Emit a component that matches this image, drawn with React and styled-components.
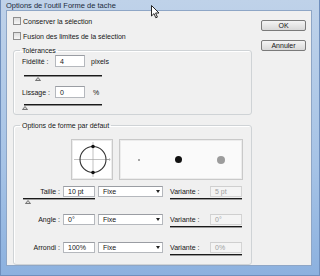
import React from "react";
import styled, { createGlobalStyle } from "styled-components";

const GlobalStyle = createGlobalStyle`
  html, body { margin: 0; padding: 0; background: #fff; }
  body {
    font-family: "Liberation Sans", Arial, sans-serif;
    font-size: 7px;
    color: #151515;
  }
`;

// window frame (aero style)
const Window = styled.div`
  position: relative;
  width: 320px;
  height: 276px;
  box-sizing: border-box;
  display: flex;
  flex-direction: column;
  background: linear-gradient(#bfd2e9, #a6c3e6 60%, #8cb1df);
  border: 1px solid #6f8fbd;
  border-top: none;
  padding: 0 7px 9px 5px;
  overflow: hidden;
`;

const TitleBar = styled.div`
  height: 18px;
  display: flex;
  align-items: center;
  font-size: 7.5px;
  color: #1c2a3c;
`;

const Cursor = styled.svg`
  position: absolute;
  left: 150px;
  top: 5px;
`;

const Client = styled.div`
  flex: 1;
  display: flex;
  gap: 9px;
  background: #f0f0f0;
  border: 1px solid #8ea6c6;
  padding: 5px 0 0 6px;
`;

const MainCol = styled.div`
  width: 239px;
  display: flex;
  flex-direction: column;
`;

const ButtonCol = styled.div`
  width: 45px;
  display: flex;
  flex-direction: column;
  gap: 9px;
  padding-top: 4px;
`;

const Button = styled.button`
  height: 11px;
  padding: 0;
  font: inherit;
  font-size: 7px;
  color: #151515;
  border: 1px solid #7a7a7a;
  border-radius: 2px;
  background: linear-gradient(#f4f4f4, #e6e6e6 50%, #d8d8d8);
  display: flex;
  align-items: center;
  justify-content: center;
`;

const CheckRow = styled.label`
  height: 10px;
  display: flex;
  align-items: center;
  gap: 2px;
  margin-top: ${(p) => (p.first ? 0 : 5)}px;
`;

const Box = styled.span`
  width: 6px;
  height: 6px;
  border: 1px solid #8e8e8e;
  background: linear-gradient(#dcdcdc, #f6f6f6);
`;

const Group = styled.fieldset`
  margin: ${(p) => p.top}px 0 0 0;
  padding: 0 0 ${(p) => p.bottom}px 0;
  border: 1px solid #cfd3d6;
  border-radius: 3px;
  box-shadow: inset 1px 1px 0 #fff;
  min-width: 0;
`;

const Legend = styled.legend`
  margin-left: 6px;
  padding: 0 2px;
  line-height: 9px;
  font-size: 7px;
`;

const TolRow = styled.div`
  height: 12px;
  display: flex;
  align-items: center;
  padding-left: 8px;
  margin-top: ${(p) => p.top}px;
`;

const TolLabel = styled.span`
  width: 33px;
`;

const Input = styled.div`
  box-sizing: border-box;
  width: ${(p) => p.w}px;
  height: ${(p) => p.h || 12}px;
  border: 1px solid ${(p) => (p.disabled ? "#d4d4d4" : "#b5b8bd")};
  border-top-color: ${(p) => (p.disabled ? "#cfcfcf" : "#9a9da3")};
  background: ${(p) => (p.disabled ? "#f4f4f4" : "#fff")};
  color: ${(p) => (p.disabled ? "#a0a0a0" : "#151515")};
  display: flex;
  align-items: center;
  padding-left: 4px;
`;

const Unit = styled.span`
  margin-left: ${(p) => p.gap}px;
`;

const Slider = styled.div`
  position: relative;
  width: ${(p) => p.w}px;
  height: 6px;
  margin: ${(p) => p.top}px 0 0 ${(p) => p.left}px;
  border-top: 1px solid #1a1a1a;
  box-shadow: inset 0 1px 0 #8a8a8a;
`;

const Thumb = styled.svg`
  position: absolute;
  top: 1px;
  left: ${(p) => p.x}px;
`;

const PreviewRow = styled.div`
  display: flex;
  gap: 6px;
  padding: 9px 0 0 57px;
`;

const PreviewBox = styled.div`
  box-sizing: border-box;
  width: ${(p) => p.w}px;
  height: 41px;
  border: 1px solid #c9c9c9;
  box-shadow: inset 0 0 0 1px #ececec;
  background: ${(p) => p.bg};
  display: flex;
  align-items: center;
  justify-content: ${(p) => p.justify || "center"};
`;

const Dot = styled.span`
  width: ${(p) => p.size}px;
  height: ${(p) => p.size}px;
  border-radius: 50%;
  background: ${(p) => p.color};
`;

const ShapeRow = styled.div`
  display: grid;
  grid-template-columns: 46px 32px 65px 41px 32px;
  grid-template-rows: 11px 6px;
  column-gap: 3px;
  row-gap: 1px;
  margin-top: ${(p) => p.top}px;
`;

const RowLabel = styled.span`
  display: flex;
  align-items: center;
  justify-content: ${(p) => (p.left ? "flex-start" : "flex-end")};
  padding-left: ${(p) => (p.left ? 4 : 0)}px;
`;

const Select = styled.div`
  box-sizing: border-box;
  border: 1px solid #b5b8bd;
  border-top-color: #9a9da3;
  background: #fff;
  display: flex;
  align-items: center;
  justify-content: space-between;
  padding: 0 2px 0 4px;
`;

const Arrow = styled.span`
  width: 0;
  height: 0;
  border-left: 2px solid transparent;
  border-right: 2px solid transparent;
  border-top: 3px solid #222;
`;

const Track = styled.div`
  position: relative;
  grid-column: ${(p) => p.col};
  margin-left: ${(p) => p.left}px;
  border-top: 1px solid #1a1a1a;
  box-shadow: inset 0 1px 0 #9a9a9a;
`;

const ThumbIcon = ({ x }) => (
  <Thumb x={x} width="6" height="4" viewBox="0 0 6 4">
    <path d="M0.5 3.5 L3 0.5 L5.5 3.5 Z" fill="#d8d8d8" stroke="#555" strokeWidth="0.8" />
  </Thumb>
);

const shapeRows = [
  { label: "Taille :", value: "10 pt", variant: "5 pt", track: true },
  { label: "Angle :", value: "0°", variant: "0°" },
  { label: "Arrondi :", value: "100%", variant: "0%" },
];

const App = () => (
  <>
    <GlobalStyle />
    <Window>
      <TitleBar>Options de l'outil Forme de tache</TitleBar>
      <Cursor width="9" height="14" viewBox="0 0 9 14">
        <path d="M0.5 0.5 L0.5 11 L3 8.6 L4.8 12.8 L6.4 12.1 L4.6 8 L8 8 Z" fill="#fff" stroke="#111" strokeWidth="0.9" />
      </Cursor>
      <Client>
        <MainCol>
          <CheckRow first>
            <Box />
            Conserver la sélection
          </CheckRow>
          <CheckRow>
            <Box />
            Fusion des limites de la sélection
          </CheckRow>

          <Group top={5} bottom={3}>
            <Legend>Tolérances</Legend>
            <TolRow top={0}>
              <TolLabel>Fidélité :</TolLabel>
              <Input w={30}>4</Input>
              <Unit gap={6}>pixels</Unit>
            </TolRow>
            <Slider w={78} left={10} top={8}>
              <ThumbIcon x={11} />
            </Slider>
            <TolRow top={4}>
              <TolLabel>Lissage :</TolLabel>
              <Input w={30}>0</Input>
              <Unit gap={8}>%</Unit>
            </TolRow>
            <Slider w={78} left={10} top={6}>
              <ThumbIcon x={-2} />
            </Slider>
          </Group>

          <Group top={6} bottom={4}>
            <Legend>Options de forme par défaut</Legend>
            <PreviewRow>
              <PreviewBox w={42} bg="#fff">
                <svg width="40" height="39" viewBox="0 0 40 39">
                  <line x1="2" y1="19.5" x2="37" y2="19.5" stroke="#a8a8a8" strokeWidth="0.7" />
                  <line x1="21" y1="2" x2="21" y2="37" stroke="#a8a8a8" strokeWidth="0.7" />
                  <circle cx="21" cy="19.5" r="13" fill="none" stroke="#333" strokeWidth="1.1" />
                  <circle cx="21" cy="6.5" r="1.8" fill="#111" />
                  <circle cx="21" cy="32.5" r="1.8" fill="#111" />
                  <path d="M35 19.5 L38 19.5 M37 18.3 L38.3 19.5 L37 20.7" stroke="#888" strokeWidth="0.6" fill="none" />
                </svg>
              </PreviewBox>
              <PreviewBox w={124} bg="#fafafa" justify="space-around">
                <Dot size={2} color="#8a8a8a" />
                <Dot size={7} color="#111" />
                <Dot size={8} color="#9c9c9c" />
              </PreviewBox>
            </PreviewRow>

            {shapeRows.map((row, i) => (
              <ShapeRow key={row.label} top={i === 0 ? 6 : 10}>
                <RowLabel>{row.label}</RowLabel>
                <Input w={32} h={11}>{row.value}</Input>
                <Select>
                  Fixe
                  <Arrow />
                </Select>
                <RowLabel left>Variante :</RowLabel>
                <Input w={32} h={11} disabled>{row.variant}</Input>
                {row.track && (
                  <Track col="1 / 3" left={9}>
                    <ThumbIcon x={2} />
                  </Track>
                )}
                <Track col="4 / 6" left={4} />
              </ShapeRow>
            ))}
          </Group>
        </MainCol>
        <ButtonCol>
          <Button>OK</Button>
          <Button>Annuler</Button>
        </ButtonCol>
      </Client>
    </Window>
  </>
);

export default App;
